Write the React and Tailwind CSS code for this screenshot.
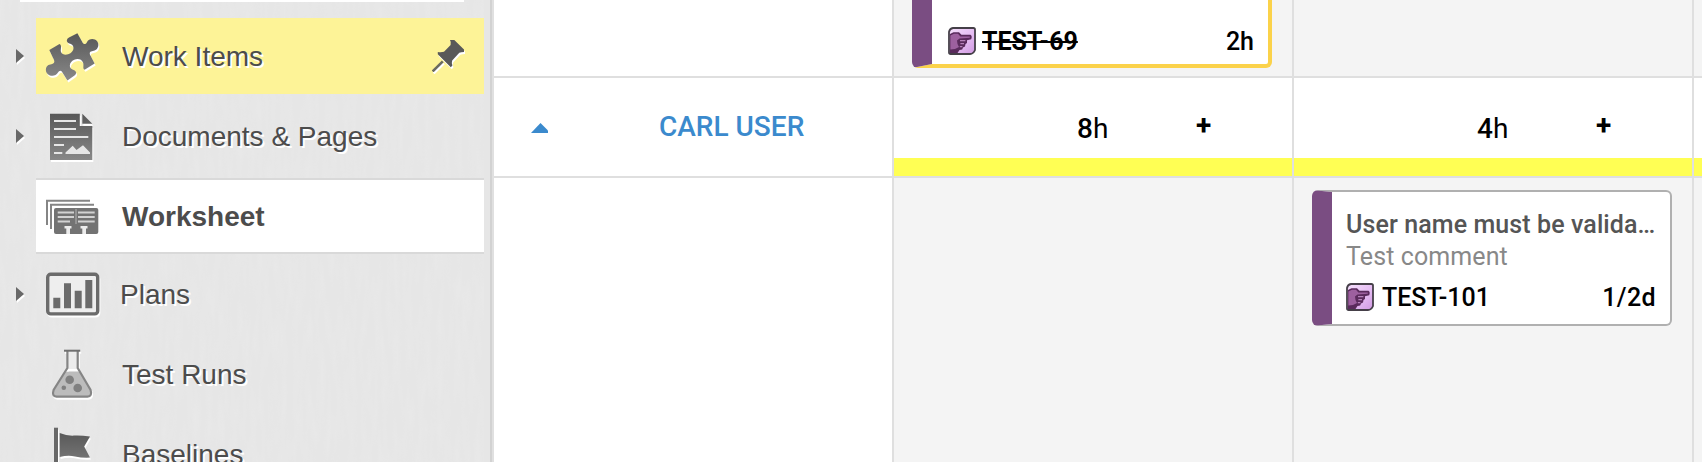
const arial = "font-['Liberation_Sans',Arial,sans-serif]";
const roboto = "font-['Roboto',sans-serif]";

function Icon({ children }) {
  return (
    <svg viewBox="0 0 64 64" className="h-16 w-16 shrink-0 [filter:drop-shadow(1px_2px_0.5px_white)]">
      <defs>
        <linearGradient id="ink" x1="0" y1="8" x2="0" y2="58" gradientUnits="userSpaceOnUse">
          <stop offset="0" stopColor="#565656" />
          <stop offset="1" stopColor="#8a8a8a" />
        </linearGradient>
      </defs>
      {children}
    </svg>
  );
}

function PuzzleIcon() {
  return (
    <Icon>
      <path
        fill="url(#ink)"
        d="M9.3 26 L19.5 20 C22.6 21.6 20 25 21 28 C22.4 31.4 27.4 31.2 30.4 29.2 C33.6 27 34.4 23.4 32.4 21 C30.6 19 28 19.8 27 17.4 Q26.2 15 29 13.6 L37.4 9.2 L42.3 18 C43.5 20.6 45.4 20.8 46.8 18.4 C48.4 15.2 52 14.4 55 15.6 C58.4 17.4 59.4 21.5 57.2 24.4 C55 27.2 52.4 26.4 50.4 27.8 C48.8 29.2 50.4 31.5 51.2 33 L54.6 39.5 L44.6 45.8 C42.2 44.8 44.2 41.5 43 38.4 C41.6 35 37.6 34.2 34.2 35.8 C30.8 37.4 28.8 40.6 30.4 43.8 C31.8 46.2 34.8 45.6 36 48 Q36.6 50 34.5 51.6 L27.4 56.6 L21.8 47.6 C20.6 45.8 19 46.7 17.8 48.8 C16.2 51.6 12.6 52.4 9.4 51.2 C6 49.6 4.8 45.6 6.8 42.6 C8.8 39.8 12 40.8 13.8 39 C15 37.6 13.8 35.4 12.8 33.6 Z"
      />
    </Icon>
  );
}

function DocumentIcon() {
  return (
    <Icon>
      <path fill="url(#ink)" d="M10 9.7H39.8V22H52.3V56H10Z" />
      <path fill="url(#ink)" d="M42.3 9.7L52.3 19.7H42.3Z" />
      <g stroke="#e6e6e6" strokeWidth="2.2">
        <path d="M14 17H36M14 25H36M14 33H48.3M14 41H24M14 49H22.3" />
      </g>
      <path fill="#e6e6e6" d="M25.5 50V48.5L32.7 41.7L36.5 46L43 41.3L50 48.5V50Z" />
    </Icon>
  );
}

function WorksheetIcon() {
  return (
    <Icon>
      <g fill="none" stroke="#858585" strokeWidth="2">
        <path d="M7 41V16.7H50" />
        <path d="M11 45V20.7H54" />
      </g>
      <rect x="14" y="24" width="44.3" height="26" rx="2" fill="#737373" />
      <g stroke="#d2d2d2" strokeWidth="2">
        <path d="M17.7 28.5H34M17.7 33H34M17.7 37.5H30M38 28.5H54.7M38 33H54.7M38 37.5H54.7" />
      </g>
      <path stroke="#b5b5b5" strokeWidth="1" d="M36 25V40" />
      <path fill="#ececec" d="M24.5 42H31.5V44.5H30V50H26.3V44.5H24.5ZM40.5 42H47.5V44.5H46V50H42.3V44.5H40.5Z" />
    </Icon>
  );
}

function ChartIcon() {
  return (
    <Icon>
      <rect x="7.7" y="12.3" width="50" height="39.6" rx="3" fill="#eeeeee" stroke="#6b6b6b" strokeWidth="3.4" />
      <path fill="#6b6b6b" d="M13.3 35.7H20.3V46.2H13.3ZM24 21.3H31V46.2H24ZM34.7 28.7H41.7V46.2H34.7ZM45.3 18H52.3V46.2H45.3Z" />
    </Icon>
  );
}

function FlaskIcon() {
  return (
    <Icon>
      <path fill="#ececec" d="M27.5 9H37.5V27H27.5Z" />
      <path fill="#bcbcbc" d="M25.8 29.7H39.4L51 49Q52 54.5 48 54.6H16Q12 54.5 13.5 49Z" />
      <path
        fill="none"
        stroke="#858585"
        strokeWidth="2.2"
        d="M27.4 9V26L13.6 48Q11.6 54.4 16.5 54.6H47.5Q52.4 54.4 50.6 48L37.7 26V9"
      />
      <path stroke="#707070" strokeWidth="2" d="M24 8.7H40.2" />
      <g fill="#808080">
        <circle cx="29.7" cy="37.7" r="4.3" />
        <circle cx="37.7" cy="46" r="4.3" />
        <circle cx="23.8" cy="45.8" r="2.3" />
      </g>
    </Icon>
  );
}

function FlagIcon() {
  return (
    <Icon>
      <path fill="#686868" d="M14 5.7H18V64H14Z" />
      <path fill="url(#ink)" d="M19.7 11Q27 14 34 13.6T50 14.6L44.2 24.5L50 35.6Q42 36 35 34.4T19.7 35Z" />
    </Icon>
  );
}

function PinIcon() {
  return (
    <svg viewBox="0 0 32 32" className="h-8 w-8 [filter:drop-shadow(1px_2px_0.5px_white)]">
      <path
        fill="#595959"
        d="M18 0H22.3L32 9.4V12Q29 12 27.3 12.8L20.2 20.4Q19.2 23.6 20.4 25.4L18.8 27.2L5.8 14.2V12Q9 12.6 12 11.8L18.6 5Q19.4 2.2 18 0Z"
      />
      <path stroke="#6a6a60" strokeWidth="2.6" d="M.6 31.4L10.8 21.4" />
    </svg>
  );
}

function HandIcon() {
  return (
    <svg viewBox="0 0 28 28" className="h-7 w-7 shrink-0">
      <defs>
        <linearGradient id="lilac" x1="0" y1="0" x2="1" y2="1">
          <stop offset="0" stopColor="#f4e0fb" />
          <stop offset=".55" stopColor="#e6bdf3" />
          <stop offset="1" stopColor="#cf97e0" />
        </linearGradient>
      </defs>
      <path fill="url(#lilac)" stroke="#453f48" strokeWidth="1.8" d="M5 1H25.4Q27 1 27 2.6V23Q25.5 26.8 22 27H2.6Q1 27 1 25.4V5Q1.6 1.6 5 1Z" />
      <path fill="#5a2a5c" d="M2 7L5.5 5.2H11L13.5 7.8H22.5Q24.5 9.2 23.2 12.2L19 13.2V16L17.5 17L17 19.6L15 20.6L14.2 22.4L11.5 23L9.5 26H2Z" />
      <path fill="#9d609f" d="M2.4 8.4L6 6.8H10L12.4 9.4H21.8V10.8L11.5 11.4L9 13.5L9.5 17L11 20L7 22L2.4 22.5Z" />
      <path stroke="#b682ba" strokeWidth="1.2" d="M12 13.6H17.4M12.4 16.6H16M11.8 19.6H14.4" />
    </svg>
  );
}

const items = [
  { label: "Work Items", Art: PuzzleIcon, arrow: true, box: "mb-1", bg: "bg-[#fdf397]", pin: true },
  { label: "Documents & Pages", Art: DocumentIcon, arrow: true, box: "mb-1" },
  {
    label: "Worksheet",
    Art: WorksheetIcon,
    box: "mb-0.5",
    bg: "bg-white shadow-[inset_0_2px_#d9d9d9,inset_0_-2px_#d9d9d9]",
    text: "font-bold",
  },
  { label: "Plans", Art: ChartIcon, arrow: true, box: "mb-1", shift: "ml-4" },
  { label: "Test Runs", Art: FlaskIcon, box: "mb-1" },
  { label: "Baselines", Art: FlagIcon, box: "" },
];

function Sidebar() {
  return (
    <nav className={`relative h-full w-[494px] shrink-0 border-r-2 border-[#e0e0e0] bg-[#e6e6e6] ${arial}`}>
      <svg className="absolute top-0 left-0 h-full w-[484px]">
        <filter id="paper" x="0" y="0" width="100%" height="100%">
          <feTurbulence type="fractalNoise" baseFrequency="0.16 0.025" numOctaves="2" seed="4" />
          <feColorMatrix values="0 0 0 0 1  0 0 0 0 1  0 0 0 0 1  0.9 0 0 0 -0.32" />
        </filter>
        <rect width="484" height="462" filter="url(#paper)" opacity=".2" />
      </svg>
      <div className="relative h-full border-r-2 border-[#d2d2d2]">
        <div className="mb-4 ml-5 h-0.5 w-[444px] bg-white" />
        {items.map(({ label, Art, arrow, box, bg = "", text = "", shift = "ml-[18px]", pin }) => (
          <div key={label} className={`flex h-[76px] items-center ${box}`}>
            <div className="flex w-9 shrink-0 pl-4">
              {arrow && (
                <svg viewBox="0 0 8 14" className="h-3.5 w-2 overflow-visible [filter:drop-shadow(1px_2px_0.5px_white)]">
                  <path fill="#686868" d="M0 0L8 7L0 14Z" />
                </svg>
              )}
            </div>
            <div className={`flex h-full w-[448px] items-center pl-1 ${bg}`}>
              <Art />
              <span
                className={`${shift} pt-0.5 text-[28px] leading-8 whitespace-nowrap text-[#4c4c4c] [text-shadow:2px_2px_0_white] ${text}`}
              >
                {label}
              </span>
              {pin && (
                <div className="mr-5 ml-auto">
                  <PinIcon />
                </div>
              )}
            </div>
          </div>
        ))}
      </div>
    </nav>
  );
}

function HoursCell({ hours }) {
  return (
    <div className="flex flex-col bg-white text-black">
      <div className="flex grow items-end pb-[13px] pl-[183px]">
        <span className="w-8 text-[28px] leading-8 whitespace-nowrap">
          <span className="font-medium">{hours}</span>h
        </span>
        <span className="mb-[3px] ml-[87px] text-[28px] leading-8 font-bold">+</span>
      </div>
      <div className="h-[18px] bg-[#ffff54]" />
    </div>
  );
}

function CardFooter({ id, time, done }) {
  return (
    <div className="flex items-start text-[25px] leading-[30px] font-medium text-black">
      <HandIcon />
      <span className={done ? "ml-1.5 font-bold line-through decoration-2" : "ml-2"}>{id}</span>
      <span className={done ? "ml-auto" : "mr-0.5 ml-auto tracking-[0.4px]"}>{time}</span>
    </div>
  );
}

export default function App() {
  return (
    <div className="flex h-[462px] w-[1702px] overflow-hidden bg-white">
      <Sidebar />
      <main
        className={`grid grow grid-cols-[398px_398px_398px_8px] grid-rows-[76px_98px_284px] gap-0.5 bg-[#dfdfdf] ${roboto}`}
      >
        <div className="bg-white" />
        <div className="flex items-end bg-[#f4f4f4] pb-2 pl-[18px]">
          <div className="h-24 w-[360px] shrink-0 rounded-md border-4 border-l-[20px] border-[#fbd24a] border-l-[#7a4d82] bg-white pt-[51px] pr-3.5 pl-4">
            <CardFooter id="TEST-69" time="2h" done />
          </div>
        </div>
        <div className="bg-[#f4f4f4]" />
        <div className="bg-[#f4f4f4]" />

        <div className="flex items-center bg-white pl-[37px] text-[#3b8acd]">
          <svg viewBox="0 0 17 10" className="mt-0.5 h-2.5 w-[17px]">
            <path fill="currentColor" d="M0 10L9.5 0L17 7.5V10Z" />
          </svg>
          <span className="ml-[111px] text-[28px] leading-8 font-medium whitespace-nowrap">CARL USER</span>
        </div>
        <HoursCell hours="8" />
        <HoursCell hours="4" />
        <div className="border-b-[18px] border-[#ffff54] bg-white" />

        <div className="bg-white" />
        <div className="bg-[#f4f4f4]" />
        <div className="bg-[#f4f4f4] pt-3 pl-[18px]">
          <div className="h-[136px] w-[360px] rounded-md border-2 border-l-[20px] border-[#b0b0b0] border-l-[#7a4d82] bg-white pt-[17px] pr-3 pl-3.5">
            <div className="truncate text-[25px] leading-8 font-medium tracking-[0.1px] text-[#555555]">
              User name must be validated
            </div>
            <div className="mb-2.5 text-[25px] leading-8 tracking-[0.1px] text-[#888888]">Test comment</div>
            <CardFooter id="TEST-101" time="1/2d" />
          </div>
        </div>
        <div className="bg-[#f4f4f4]" />
      </main>
    </div>
  );
}
